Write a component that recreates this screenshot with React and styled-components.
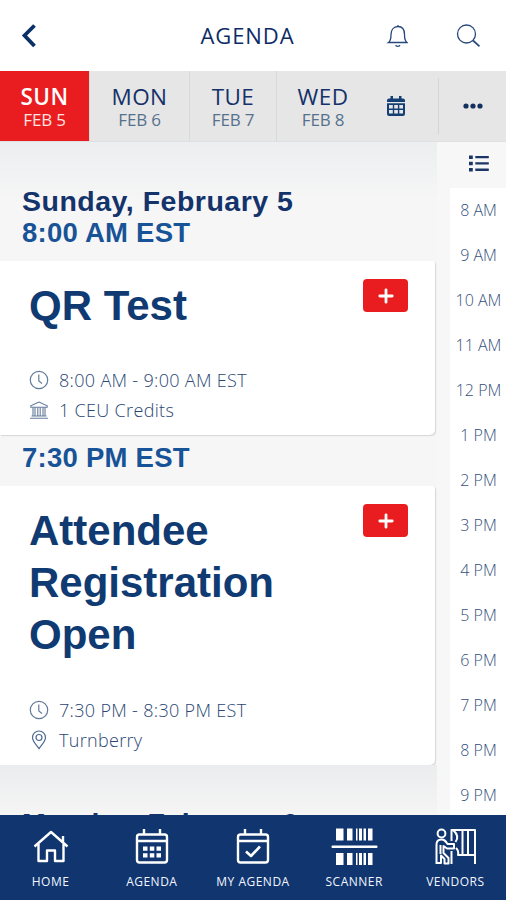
import React from 'react'
import styled, { createGlobalStyle } from 'styled-components'

const days = [
  { name: 'SUN', date: 'FEB 5', width: 89, active: true },
  { name: 'MON', date: 'FEB 6', width: 100 },
  { name: 'TUE', date: 'FEB 7', width: 87 },
  { name: 'WED', date: 'FEB 8', width: 93 },
]

const hours = [
  '8 AM', '9 AM', '10 AM', '11 AM', '12 PM', '1 PM', '2 PM',
  '3 PM', '4 PM', '5 PM', '6 PM', '7 PM', '8 PM', '9 PM',
]

export default function App() {
  return (
    <Screen>
      <GlobalStyle />
      <Header>
        <IconButton aria-label="Back"><BackIcon /></IconButton>
        <Title>AGENDA</Title>
        <HeaderActions>
          <IconButton aria-label="Notifications"><BellIcon /></IconButton>
          <IconButton aria-label="Search"><SearchIcon /></IconButton>
        </HeaderActions>
      </Header>

      <DayBar>
        {days.map((day) => (
          <DayTab key={day.name} $width={day.width} $active={day.active}>
            <DayName $active={day.active}>{day.name}</DayName>
            <DayDate $active={day.active}>{day.date}</DayDate>
          </DayTab>
        ))}
        <CalendarButton aria-label="Pick a date"><CalendarIcon /></CalendarButton>
        <MoreButton aria-label="More"><DotsIcon /></MoreButton>
      </DayBar>

      <Content>
        <Sessions>
          <DayHeading>Sunday, February 5</DayHeading>
          <TimeHeading>8:00 AM EST</TimeHeading>
          <Card $height={174}>
            <CardTop>
              <SessionName>QR Test</SessionName>
              <AddButton aria-label="Add to my agenda"><PlusIcon /></AddButton>
            </CardTop>
            <Details>
              <Detail><ClockIcon />8:00 AM - 9:00 AM EST</Detail>
              <Detail><BankIcon />1 CEU Credits</Detail>
            </Details>
          </Card>

          <TimeHeading $spaced>7:30 PM EST</TimeHeading>
          <Card $height={279}>
            <CardTop>
              <SessionName>Attendee Registration Open</SessionName>
              <AddButton aria-label="Add to my agenda"><PlusIcon /></AddButton>
            </CardTop>
            <Details>
              <Detail><ClockIcon />7:30 PM - 8:30 PM EST</Detail>
              <Detail><PinIcon />Turnberry</Detail>
            </Details>
          </Card>
          <NextDay>
            <DayHeading>Monday, February 6</DayHeading>
          </NextDay>
        </Sessions>

        <Rail>
          <RailTop><ListIcon /></RailTop>
          <Hours>
            {hours.map((hour) => <Hour key={hour}>{hour}</Hour>)}
          </Hours>
        </Rail>
      </Content>

      <NavBar>
        <NavItem><HomeIcon />HOME</NavItem>
        <NavItem><AgendaIcon />AGENDA</NavItem>
        <NavItem><MyAgendaIcon />MY AGENDA</NavItem>
        <NavItem><ScannerIcon />SCANNER</NavItem>
        <NavItem><VendorsIcon />VENDORS</NavItem>
      </NavBar>
    </Screen>
  )
}

const BackIcon = () => (
  <svg width="18" height="28" viewBox="0 0 18 28" fill="none" stroke="#0b3068" strokeWidth="3.8">
    <path d="M14.500 3.500 4.500 13.500l10 10.500" />
  </svg>
)

const BellIcon = () => (
  <svg width="22" height="26" viewBox="0 0 22 26" fill="none" stroke="#27477a" strokeWidth="1.3">
    <path d="M12 2v1.500M2.500 19.500c2.200-1.500 2.500-4 2.500-8 0-4.500 2.500-8 7-8s6.500 3.500 6.500 8c0 4 .3 6.500 2.500 8zM9.800 22a2 1.400 0 0 0 4 0" />
  </svg>
)

const SearchIcon = () => (
  <svg width="26" height="26" viewBox="0 0 26 26" fill="none" stroke="#27477a" strokeWidth="1.3">
    <circle cx="11.500" cy="11" r="9" />
    <path d="m18 17.500 6.500 5.800" strokeWidth="1.700" />
  </svg>
)

const CalendarIcon = () => (
  <svg width="18" height="20" viewBox="0 0 18 20" fill="#153f73">
    <path d="M3.500 0h2.500v2.500h6V0h2.500v2.500H16a2 2 0 0 1 2 2V6H0V4.500a2 2 0 0 1 2-2h1.500z" />
    <path
      fillRule="evenodd"
      d="M0 7.200h18V18a2 2 0 0 1-2 2H2a2 2 0 0 1-2-2zM2 9v3.500h3.800V9zm5.200 0v3.500h3.700V9zm5.100 0v3.500H16V9zM2 14v3.500h3.800V14zm5.200 0v3.500h3.700V14zm5.100 0v3.500H16V14z"
    />
  </svg>
)

const DotsIcon = () => (
  <svg width="20" height="6" viewBox="0 0 20 6" fill="#14305f">
    <circle cx="3" cy="3" r="2.600" />
    <circle cx="10" cy="3" r="2.600" />
    <circle cx="17" cy="3" r="2.600" />
  </svg>
)

const ListIcon = () => (
  <svg width="20" height="17" viewBox="0 0 20 17" fill="#1c3568">
    <path d="M0 .5h3.800v3.400H0zM0 6.800h3.800v3.400H0zM0 13.100h3.800v3.400H0zM6.300 1h13.500v2.300H6.300zM6.300 7.300h13.500v2.300H6.300zM6.300 13.600h13.500v2.300H6.300z" />
  </svg>
)

const PlusIcon = () => (
  <svg width="16" height="16" viewBox="0 0 16 16" stroke="#fff" strokeWidth="2.8" strokeLinecap="round">
    <path d="M8 1.800v12.400M1.800 8h12.400" />
  </svg>
)

const ClockIcon = () => (
  <svg width="20" height="20" viewBox="0 0 20 20" fill="none" stroke="#647b9c" strokeWidth="1.2">
    <circle cx="10" cy="10" r="8.700" />
    <path d="M9.800 4.500V11l3.200 2.500" />
  </svg>
)

const BankIcon = () => (
  <svg width="20" height="20" viewBox="0 0 20 20" fill="none" stroke="#647b9c" strokeWidth="1.1">
    <path d="M10 2 1.800 5.800v1.500h16.400V5.800zM2.500 16h15M1 18.200h18" />
    <path d="M4 7.500V16M6 7.500V16M8.800 7.500V16M11.200 7.500V16M14 7.500V16M16 7.500V16" />
  </svg>
)

const PinIcon = () => (
  <svg width="20" height="20" viewBox="0 0 20 20" fill="none" stroke="#4d6a93" strokeWidth="1.2">
    <path d="M10 18.700C7.500 15 3.500 11.500 3.500 7.500a6.500 6.500 0 0 1 13 0c0 4-4 7.500-6.500 11.200z" />
    <circle cx="10" cy="7.500" r="3" />
  </svg>
)

const HomeIcon = () => (
  <NavSvg width="38" height="38" viewBox="0 0 38 38">
    <path d="M2.500 18.500 19 4l16.500 14.500M6.500 16v17H15V22.500h8V33h8.500V16M31 14V8" />
  </NavSvg>
)

const CalendarFrame = () => (
  <path d="M6.500 6.500h25a2.500 2.500 0 0 1 2.500 2.500v23a2.500 2.500 0 0 1-2.500 2.500h-25a2.500 2.500 0 0 1-2.500-2.500V9a2.500 2.500 0 0 1 2.500-2.500zM4 13h30M11 1v5.500M27 1v5.500" />
)

const AgendaIcon = () => (
  <NavSvg width="38" height="38" viewBox="0 0 38 38">
    <CalendarFrame />
    <path d="M10 18.500h4.500v4.200H10zM16.800 18.500h4.500v4.200h-4.500zM23.500 18.500H28v4.200h-4.500zM10 25.300h4.500v4.200H10zM16.800 25.300h4.500v4.200h-4.500zM23.500 25.300H28v4.200h-4.500z" fill="#fff" stroke="none" />
  </NavSvg>
)

const MyAgendaIcon = () => (
  <NavSvg width="38" height="38" viewBox="0 0 38 38">
    <CalendarFrame />
    <path d="m12 23.500 5 4.500 9-9.500" strokeWidth="2.600" />
  </NavSvg>
)

const ScannerIcon = () => (
  <svg width="48" height="38" viewBox="0 0 48 38" fill="#fff">
    <path d="M6 .5h7.500v12H6zM17 .5h5.500v12H17zM26 .5h1.500v12H26zM29 .5h3v12h-3zM33.500 .5H36v12h-2.500zM38 .5h4.500v12H38z" />
    <path d="M6 25h7.500v12H6zM17 25h5.500v12H17zM26 25h1.500v12H26zM29 25h3v12h-3zM33.500 25H36v12h-2.500zM38 25h4.500v12H38z" />
    <rect x="1.500" y="17.500" width="46" height="2.400" rx="1" />
  </svg>
)

const VendorsIcon = () => (
  <NavSvg width="42" height="38" viewBox="0 0 42 38" strokeWidth="2">
    <circle cx="7.500" cy="5.500" r="3.900" />
    <path d="M2.500 36V16.500q0-5 5-5c3 0 4 1.500 6 4.500h6.500v4.500h-7L9.500 18v7l5 5v5.500h-4V31L7 27.500V35H2.500M6.500 17v9" />
    <path d="M17.500 13V2H41v34M17.500 23v13M19 2q7 6 2.500 12M22 20q3 3 2 7h4.500V2M28.500 27H34V2M34 27h6.500" />
  </NavSvg>
)

const GlobalStyle = createGlobalStyle`
  body {
    margin: 0;
    background: #fff;
  }

  svg {
    display: block;
    flex-shrink: 0;
  }
`

const Screen = styled.div`
  font-family: "Open Sans", sans-serif;
  color: #153568;
  display: flex;
  flex-direction: column;
  width: 506px;
  height: 900px;
  overflow: hidden;
`

const Header = styled.header`
  display: grid;
  grid-template-columns: 160px 1fr 160px;
  align-items: center;
  height: 71px;
  flex-shrink: 0;
  box-sizing: border-box;
  background: #fff;
`

const IconButton = styled.button`
  display: flex;
  width: max-content;
  padding: 0;
  margin-left: 20px;
  border: 0;
  background: none;
`

const Title = styled.h1`
  font-size: 22px;
  font-weight: 500;
  line-height: 30px;
  letter-spacing: 0.9px;
  text-align: center;
  margin: 0;
  padding: 0 11px 1px 0;
  color: #0d2c66;
`

const HeaderActions = styled.div`
  display: flex;
  align-items: center;
  gap: 27px;
  padding-left: 20px;
`

const DayBar = styled.nav`
  display: flex;
  height: 70px;
  flex-shrink: 0;
  background: #e6e6e6;
  border-bottom: 1px solid #dfe0e1;
`

const DayTab = styled.div`
  display: flex;
  flex-direction: column;
  align-items: center;
  box-sizing: border-box;
  width: ${(props) => props.$width}px;
  padding-top: 13px;
  background: ${(props) => (props.$active ? '#e91d1f' : 'transparent')};

  & + & {
    border-left: 1px solid #d8d9da;
  }
`

const DayName = styled.span`
  font-size: 22.5px;
  font-weight: ${(props) => (props.$active ? 600 : 500)};
  line-height: 26px;
  letter-spacing: 0.4px;
  color: ${(props) => (props.$active ? '#fff' : '#14316a')};
`

const DayDate = styled.span`
  font-size: 17px;
  line-height: 19px;
  letter-spacing: -0.2px;
  color: ${(props) => (props.$active ? '#ffe3e0' : '#56718d')};
`

const CalendarButton = styled.button`
  display: flex;
  align-items: center;
  flex: 1;
  padding: 0 0 0 18px;
  border: 0;
  background: none;
`

const MoreButton = styled.button`
  display: flex;
  align-items: center;
  justify-content: center;
  width: 68px;
  margin: 7px 0;
  padding: 0;
  border: 0;
  border-left: 1px solid #d3d4d5;
  background: none;
`

const Content = styled.main`
  display: flex;
  flex: 1;
  min-height: 0;
  overflow: hidden;
`

const Sessions = styled.section`
  box-sizing: border-box;
  width: 437px;
  padding-top: 43px;
  background: linear-gradient(#eceef0, #f6f6f6 60px);
`

const DayHeading = styled.h2`
  font-family: "Liberation Sans", Arial, sans-serif;
  font-size: 28.5px;
  line-height: 32px;
  letter-spacing: 0.5px;
  margin: 0;
  padding-left: 22px;
  color: #14336b;
`

const TimeHeading = styled.h3`
  font-family: "Liberation Sans", Arial, sans-serif;
  font-size: 27.5px;
  line-height: 32px;
  letter-spacing: 0.25px;
  margin: 0;
  padding: ${(props) => (props.$spaced ? '7px 0 12px 22px' : '0 0 12px 22px')};
  color: #185397;
`

const Card = styled.article`
  display: flex;
  flex-direction: column;
  justify-content: space-between;
  box-sizing: border-box;
  width: 435px;
  height: ${(props) => props.$height}px;
  padding: 18px 27px 10px 29px;
  border-radius: 0 3px 5px 0;
  background: #fff;
  box-shadow: 1px 1px 1px #d5d6d7;
`

const CardTop = styled.div`
  display: flex;
  justify-content: space-between;
  align-items: flex-start;
`

const SessionName = styled.h4`
  font-family: "Liberation Sans", Arial, sans-serif;
  font-size: 42px;
  line-height: 52px;
  width: 270px;
  margin: 0;
  padding-top: 1px;
  color: #103a72;
`

const AddButton = styled.button`
  display: flex;
  align-items: center;
  justify-content: center;
  width: 45px;
  height: 33px;
  padding: 0;
  border: 0;
  border-radius: 4px;
  background: #e91d1f;
`

const Details = styled.ul`
  list-style: none;
  margin: 0;
  padding: 0;
`

const Detail = styled.li`
  display: flex;
  align-items: center;
  gap: 10px;
  height: 30px;
  font-size: 18px;
  font-weight: 350;
  letter-spacing: 0.32px;
  color: #2b4773;
`

const NextDay = styled.div`
  padding-top: 42px;
  background: linear-gradient(#ebecee, #f5f5f5 50px);
`

const Rail = styled.aside`
  display: flex;
  flex-direction: column;
  width: 69px;
  background: #f7f7f7;
`

const RailTop = styled.div`
  display: flex;
  align-items: center;
  height: 46px;
  flex-shrink: 0;
  padding: 0 0 4px 32px;
  box-sizing: border-box;
`

const Hours = styled.div`
  flex: 1;
  margin-left: 13px;
  background: #fff;
`

const Hour = styled.div`
  height: 45px;
  line-height: 45px;
  font-size: 16px;
  font-weight: 350;
  padding-left: 1px;
  text-align: center;
  white-space: nowrap;
  color: #36507c;
`

const NavBar = styled.footer`
  display: grid;
  grid-template-columns: repeat(5, 1fr);
  height: 85px;
  flex-shrink: 0;
  box-sizing: border-box;
  padding-top: 13px;
  background: #10356f;
`

const NavItem = styled.a`
  display: flex;
  flex-direction: column;
  align-items: center;
  gap: 6px;
  font-size: 12px;
  font-weight: 500;
  line-height: 20px;
  letter-spacing: 0.5px;
  white-space: nowrap;
  color: #f2f6ff;
`

const NavSvg = styled.svg`
  fill: none;
  stroke: #fff;
  stroke-width: ${(props) => props.strokeWidth || 2.4};
  stroke-linejoin: round;
`
